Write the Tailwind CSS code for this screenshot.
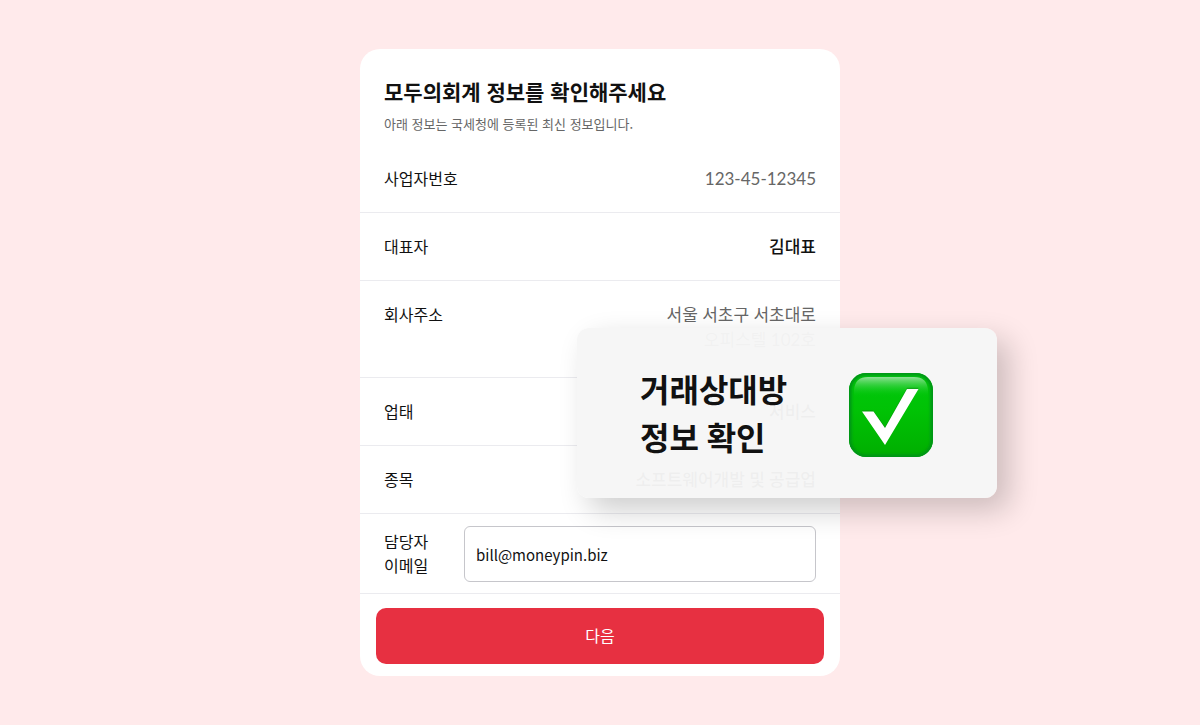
<!DOCTYPE html>
<html lang="ko">
<head>
<meta charset="utf-8">
<meta name="viewport" content="width=device-width, initial-scale=1">
<title>모두의회계 정보 확인</title>
<script src="https://cdn.jsdelivr.net/npm/@tailwindcss/browser@4"></script>
</head>
<body class="min-h-screen flex items-center justify-center bg-[#ffeaeb] font-['Lato','Noto_Sans_CJK_KR',sans-serif] text-[#111111]">
<main class="relative w-full max-w-[480px]">
  <form class="rounded-[20px] bg-white pb-3">
    <header class="px-6 pt-[26px] pb-[9px] font-['Noto_Sans_CJK_KR',sans-serif]">
      <h1 class="text-[21px] leading-8 font-bold">모두의회계 정보를 확인해주세요</h1>
      <p class="pt-[5px] text-[13px] leading-6 text-[#666666]">아래 정보는 국세청에 등록된 최신 정보입니다.</p>
    </header>
    <dl>
      <div class="flex justify-between border-b border-[#ebebef] px-6 pt-[21px] pb-[21px]">
        <dt class="text-base leading-[25px]">사업자번호</dt>
        <dd class="text-[17px] leading-[25px] text-[#666666]">123-45-12345</dd>
      </div>
      <div class="flex justify-between border-b border-[#ebebef] px-6 pt-[21px] pb-[21px]">
        <dt class="text-base leading-[25px]">대표자</dt>
        <dd class="text-[17px] leading-[25px] font-medium">김대표</dd>
      </div>
      <div class="flex justify-between border-b border-[#ebebef] px-6 pt-[21px] pb-[25px]">
        <dt class="text-base leading-[25px]">회사주소</dt>
        <dd class="text-right text-[17px] leading-[25px] text-[#666666]">서울 서초구 서초대로<br>오피스텔 102호</dd>
      </div>
      <div class="flex justify-between border-b border-[#ebebef] px-6 pt-[21px] pb-[21px]">
        <dt class="text-base leading-[25px]">업태</dt>
        <dd class="text-[17px] leading-[25px] font-medium">서비스</dd>
      </div>
      <div class="flex justify-between border-b border-[#ebebef] px-6 pt-[21px] pb-[21px]">
        <dt class="text-base leading-[25px]">종목</dt>
        <dd class="text-[17px] leading-[25px] font-medium">소프트웨어개발 및 공급업</dd>
      </div>
    </dl>
    <div class="flex items-center border-b border-[#ebebef] px-6 pt-3 pb-[11px]">
      <label for="email" class="w-20 shrink-0 text-base leading-6">담당자<br>이메일</label>
      <input id="email" type="email" value="bill@moneypin.biz" class="h-14 min-w-0 flex-1 rounded-md border border-[#c6c6cb] bg-white px-[11px] font-['Noto_Sans_CJK_KR',sans-serif] text-[15px] outline-none">
    </div>
    <div class="px-4 pt-3.5">
      <button type="button" class="h-14 w-full rounded-[10px] bg-[#e73041] text-base text-white">다음</button>
    </div>
  </form>
  <aside class="absolute top-[279px] left-[217px] flex h-[170px] w-[420px] items-center justify-between rounded-xl bg-[#f6f6f6]/97 pt-1 pr-16 pl-[63px] shadow-[12px_12px_30px_rgba(0,0,0,0.2)]">
    <p class="pb-0.5 text-[32px] leading-[48px] font-bold">거래상대방<br>정보 확인</p>
    <svg class="size-[84px]" viewBox="0 0 84 84" role="img" aria-label="확인 완료">
      <defs>
        <linearGradient id="base" x1="0" y1="0" x2="0" y2="1"><stop offset="0" stop-color="#00c80c"/><stop offset=".45" stop-color="#00c205"/><stop offset="1" stop-color="#00ae00"/></linearGradient>
        <linearGradient id="gloss" x1="0" y1="0" x2="0" y2="1"><stop offset="0" stop-color="#8fe096"/><stop offset="1" stop-color="#00c80c" stop-opacity="0"/></linearGradient>
        <filter id="soft" x="-10%" y="-10%" width="120%" height="120%"><feGaussianBlur stdDeviation="1.8"/></filter>
        <clipPath id="tile"><rect width="84" height="84" rx="17"/></clipPath>
      </defs>
      <g clip-path="url(#tile)">
        <rect width="84" height="84" fill="url(#base)"/>
        <rect width="84" height="84" rx="17" fill="none" stroke="#009312" stroke-width="5" filter="url(#soft)"/>
        <path d="M5 24V17Q6 4 19 4H65Q78 4 79 17V24Z" fill="url(#gloss)"/>
      </g>
      <path d="M13 38H24L36 54.500L58 15.500H69.500L36 72Z" fill="#0a7a10" opacity=".45" transform="translate(0 -.8)"/>
      <path d="M13 38.500H24.500L36 55L58 16H69.500L36 72Z" fill="#fff"/>
    </svg>
  </aside>
</main>
</body>
</html>
